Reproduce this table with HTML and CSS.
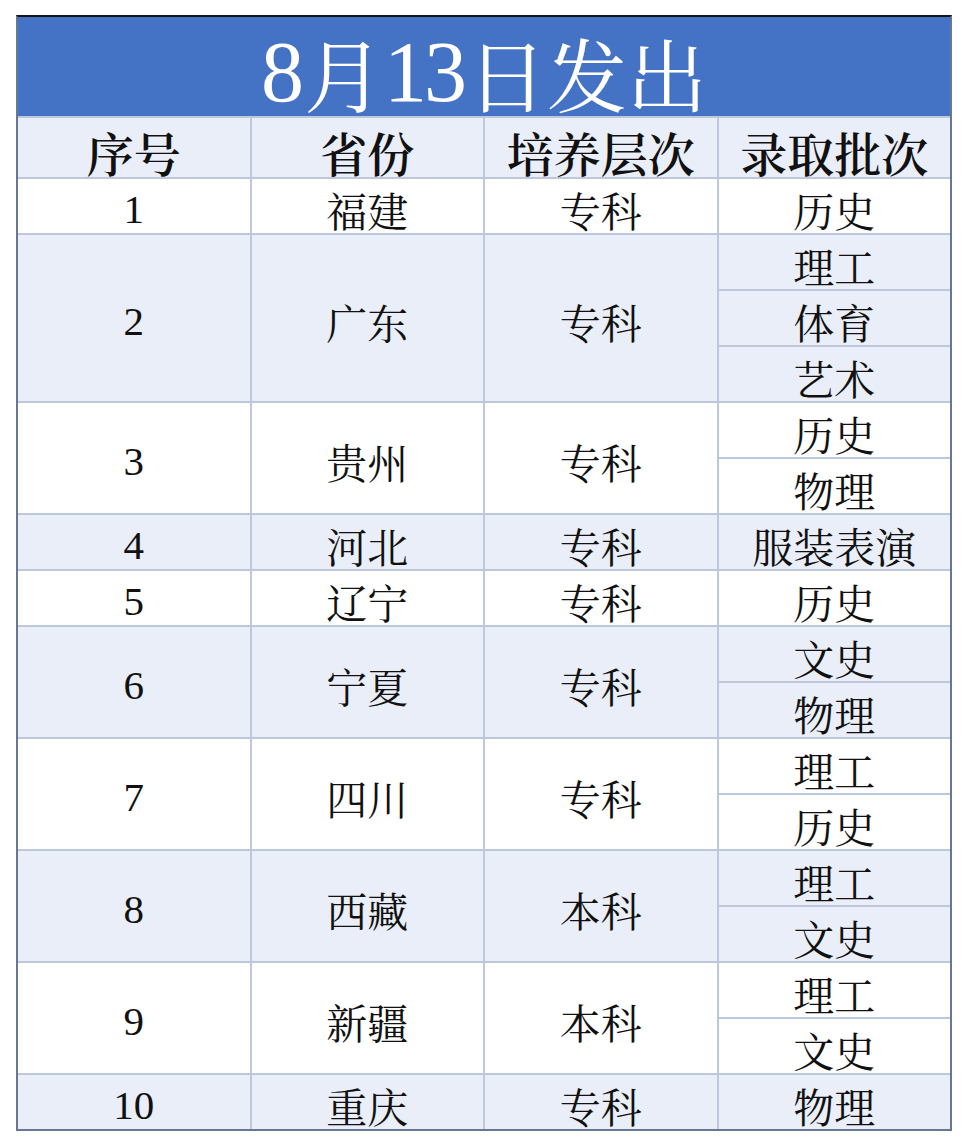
FILE: index.html
```html
<!DOCTYPE html>
<html lang="zh-CN">
<head>
<meta charset="utf-8">
<title>8月13日发出</title>
<link rel="stylesheet" href="styles.css">
</head>
<body>
<div class="page">
  <div class="sheet">
    <div class="title"><span class="num">8</span>月<span class="num">13</span>日发出</div>
    <div class="hd">序号</div><div class="hd">省份</div><div class="hd">培养层次</div><div class="hd">录取批次</div>

    <div class="c w">1</div><div class="c w">福建</div><div class="c w">专科</div><div class="c w">历史</div>

    <div class="c b s3">2</div><div class="c b s3">广东</div><div class="c b s3">专科</div><div class="c b">理工</div><div class="c b">体育</div><div class="c b">艺术</div>

    <div class="c w s2">3</div><div class="c w s2">贵州</div><div class="c w s2">专科</div><div class="c w">历史</div><div class="c w">物理</div>

    <div class="c b">4</div><div class="c b">河北</div><div class="c b">专科</div><div class="c b">服装表演</div>

    <div class="c w">5</div><div class="c w">辽宁</div><div class="c w">专科</div><div class="c w">历史</div>

    <div class="c b s2">6</div><div class="c b s2">宁夏</div><div class="c b s2">专科</div><div class="c b">文史</div><div class="c b">物理</div>

    <div class="c w s2">7</div><div class="c w s2">四川</div><div class="c w s2">专科</div><div class="c w">理工</div><div class="c w">历史</div>

    <div class="c b s2">8</div><div class="c b s2">西藏</div><div class="c b s2">本科</div><div class="c b">理工</div><div class="c b">文史</div>

    <div class="c w s2">9</div><div class="c w s2">新疆</div><div class="c w s2">本科</div><div class="c w">理工</div><div class="c w">文史</div>

    <div class="c b">10</div><div class="c b">重庆</div><div class="c b">专科</div><div class="c b">物理</div>
  </div>
</div>
</body>
</html>
```
FILE: styles.css
```css
html, body {
  margin: 0;
  padding: 0;
  background: #ffffff;
}
.page {
  padding: 15px 0 0 16px;
}
.sheet {
  width: 936px;
  box-sizing: border-box;
  display: grid;
  grid-template-columns: repeat(4, 1fr);
  grid-template-rows: 99px 59px;
  grid-auto-rows: 54px;
  gap: 2px;
  background: #bec8dc;
  border-top: 2px solid #141414;
  border-left: 2px solid #687894;
  border-right: 2px solid #687894;
  border-bottom: 2px solid #687894;
  font-family: "Liberation Serif", "Noto Serif CJK SC", "Noto Sans CJK SC", serif;
  color: #111111;
}
.title {
  grid-column: 1 / -1;
  background: #4472c4;
  color: #ffffff;
  font-family: "Noto Serif CJK SC", "Liberation Serif", serif;
  font-size: 80px;
  line-height: 1;
  display: flex;
  align-items: center;
  justify-content: center;
  padding-top: 10px;
  box-sizing: border-box;
}
.title .num {
  font-family: "Liberation Serif", serif;
  font-size: 86px;
  letter-spacing: -3px;
  margin-right: 3px;
}
.hd {
  background: #e9eef8;
  font-size: 47px;
  font-weight: 600;
  display: flex;
  align-items: center;
  justify-content: center;
  padding-top: 8px;
  box-sizing: border-box;
}
.c {
  font-size: 41px;
  display: flex;
  align-items: center;
  justify-content: center;
  padding-top: 6px;
  box-sizing: border-box;
}
.w { background: #ffffff; }
.b { background: #e9eef8; }
.s2 { grid-row: span 2; }
.s3 { grid-row: span 3; }
```
